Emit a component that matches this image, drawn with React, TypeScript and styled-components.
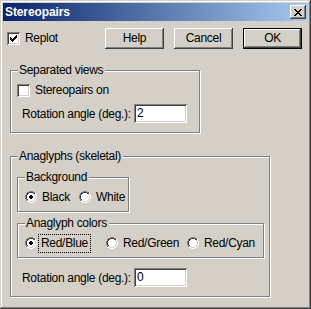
import React from "react";
import styled, { createGlobalStyle } from "styled-components";

const Global = createGlobalStyle`
  html, body { margin: 0; padding: 0; background: #D4D0C8; }
  body { font-family: "Liberation Sans", Arial, sans-serif; font-size: 12px; color: #000; }
`;

const Window = styled.div`
  width: 311px;
  height: 309px;
  box-sizing: border-box;
  background: #d4d0c8;
  padding: 3px;
  box-shadow: inset -1px -1px #404040, inset 1px 1px #d4d0c8, inset -2px -2px #808080, inset 2px 2px #ffffff;
  display: flex;
  flex-direction: column;
`;

const TitleBar = styled.div`
  height: 18px;
  flex: none;
  background: linear-gradient(to right, #0a246a, #a6caf0);
  display: flex;
  align-items: center;
  justify-content: space-between;
  padding: 0 2px;
`;

const TitleText = styled.span`
  color: #fff;
  font-weight: bold;
  font-size: 12px;
  letter-spacing: -0.1px;
  line-height: 18px;
`;

const CloseButton = styled.div`
  width: 16px;
  height: 14px;
  box-sizing: border-box;
  background: #d4d0c8;
  box-shadow: inset -1px -1px #404040, inset 1px 1px #ffffff, inset -2px -2px #808080;
  display: flex;
  align-items: center;
  justify-content: center;
  padding-right: 1px;
`;

const Body = styled.div`
  flex: 1;
  padding: 7px 6px 0 4px;
  display: flex;
  flex-direction: column;
  letter-spacing: -0.3px;
`;

const TopRow = styled.div`
  display: flex;
  align-items: center;
  height: 21px;
`;

const ButtonGroup = styled.div`
  margin-left: auto;
  display: flex;
  gap: 10px;
`;

const Button = styled.div<{ $default?: boolean }>`
  width: 59px;
  height: 21px;
  box-sizing: border-box;
  display: flex;
  align-items: center;
  justify-content: center;
  background: #d4d0c8;
  box-shadow: ${(p) =>
    p.$default
      ? "inset 0 0 0 1px #000, inset -2px -2px #404040, inset 2px 2px #ffffff, inset -3px -3px #808080"
      : "inset -1px -1px #404040, inset 1px 1px #ffffff, inset -2px -2px #808080"};
  padding-bottom: 1px;
`;

const CheckLabel = styled.label`
  display: flex;
  align-items: center;
  gap: 5px;
  height: 13px;
  line-height: 13px;
`;

const CheckBox = styled.span`
  width: 13px;
  height: 13px;
  box-sizing: border-box;
  flex: none;
  background: #fff;
  box-shadow: inset 1px 1px #808080, inset -1px -1px #ffffff, inset 2px 2px #404040, inset -2px -2px #d4d0c8;
  display: flex;
  align-items: center;
  justify-content: center;
`;

const Group = styled.div<{ $w: number; $h: number; $pt?: number }>`
  position: relative;
  width: ${(p) => p.$w}px;
  height: ${(p) => p.$h}px;
  box-sizing: border-box;
  border: 1px solid #808080;
  box-shadow: inset 1px 1px #ffffff, 1px 1px #ffffff;
  padding: ${(p) => p.$pt ?? 13}px 6px 0 6px;
  display: flex;
  flex-direction: column;
`;

const Legend = styled.span`
  position: absolute;
  top: -8px;
  left: 7px;
  padding: 0 2px 0 1px;
  background: #d4d0c8;
  line-height: 14px;
`;

const Group1 = styled(Group)`
  margin-top: 21px;
  margin-left: 3px;
`;

const Group2 = styled(Group)`
  margin-top: 23px;
  margin-left: 3px;
`;

const SubGroupGap = styled.div`
  height: 11px;
  flex: none;
`;

const FieldRow = styled.div<{ $mt: number }>`
  display: flex;
  align-items: center;
  margin-top: ${(p) => p.$mt}px;
  margin-left: 5px;
`;

const FieldLabel = styled.span`
  width: 112px;
  white-space: nowrap;
`;

const TextInput = styled.div`
  width: 53px;
  height: 19px;
  box-sizing: border-box;
  background: #fff;
  box-shadow: inset 1px 1px #808080, inset -1px -1px #ffffff, inset 2px 2px #404040, inset -2px -2px #d4d0c8;
  padding: 2px 3px;
  line-height: 15px;
`;

const RadioRow = styled.div`
  display: flex;
  align-items: center;
  padding-left: 1px;
`;

const RadioOption = styled.label<{ $w: number }>`
  width: ${(p) => p.$w}px;
  display: flex;
  align-items: center;
  height: 12px;
  flex: none;
`;

const RadioCircle = styled.span`
  width: 12px;
  height: 12px;
  flex: none;
  position: relative;
  margin-right: 4px;
`;

const RadioText = styled.span<{ $focus?: boolean }>`
  padding: 1px 1px;
  margin-left: ${(p) => (p.$focus ? -1 : 0)}px;
  outline: ${(p) => (p.$focus ? "1px dotted #000" : "none")};
  outline-offset: 1px;
  line-height: 13px;
  white-space: nowrap;
`;

const Check = () => (
  <svg width="7" height="7" viewBox="0 0 7 7" shapeRendering="crispEdges">
    <rect x="6" y="0" width="1" height="3" fill="#000" />
    <rect x="5" y="1" width="1" height="3" fill="#000" />
    <rect x="4" y="2" width="1" height="3" fill="#000" />
    <rect x="3" y="3" width="1" height="3" fill="#000" />
    <rect x="2" y="4" width="1" height="3" fill="#000" />
    <rect x="1" y="3" width="1" height="3" fill="#000" />
    <rect x="0" y="2" width="1" height="3" fill="#000" />
  </svg>
);

const CloseX = () => (
  <svg width="8" height="7" viewBox="0 0 8 7" shapeRendering="crispEdges">
    <path d="M0 0h2v1h-2zM6 0h2v1h-2zM1 1h2v1h-2zM5 1h2v1h-2zM2 2h4v1h-4zM3 3h2v1h-2zM2 4h4v1h-4zM1 5h2v1h-2zM5 5h2v1h-2zM0 6h2v1h-2zM6 6h2v1h-2z" fill="#000" />
  </svg>
);

const Radio = ({ checked }: { checked?: boolean }) => (
  <RadioCircle>
    <svg width="12" height="12" viewBox="0 0 12 12" shapeRendering="crispEdges">
      {/* outer ring: top-left gray, bottom-right white */}
      <path d="M4 0h4v1h-4zM2 1h2v1h-2zM8 1h2v1h-2zM1 2h1v2h-1zM0 4h1v4h-1zM1 8h1v2h-1z" fill="#808080" />
      <path d="M10 2h1v2h-1zM11 4h1v4h-1zM10 8h1v2h-1zM8 10h2v1h-2zM2 10h2v1h-2zM4 11h4v1h-4z" fill="#ffffff" />
      {/* inner ring: top-left dark, bottom-right light */}
      <path d="M4 1h4v1h-4zM2 2h2v1h-2zM8 2h2v1h-2zM2 3h1v1h-1zM1 4h1v4h-1zM2 8h1v1h-1z" fill="#404040" />
      <path d="M9 3h1v1h-1zM10 4h1v4h-1zM9 8h1v1h-1zM8 9h2v1h-2zM2 9h2v1h-2zM4 10h4v1h-4z" fill="#d4d0c8" />
      {/* white fill */}
      <path d="M4 2h4v1h-4zM3 3h6v1h-6zM2 4h8v4h-8zM3 8h6v1h-6zM4 9h4v1h-4z" fill="#ffffff" />
      {checked && <path d="M5 4h2v1h-2zM4 5h4v2h-4zM5 7h2v1h-2z" fill="#000" />}
    </svg>
  </RadioCircle>
);

export default function App() {
  return (
    <>
      <Global />
      <Window>
        <TitleBar>
          <TitleText>Stereopairs</TitleText>
          <CloseButton>
            <CloseX />
          </CloseButton>
        </TitleBar>
        <Body>
          <TopRow>
            <CheckLabel>
              <CheckBox>
                <Check />
              </CheckBox>
              Replot
            </CheckLabel>
            <ButtonGroup>
              <Button>Help</Button>
              <Button>Cancel</Button>
              <Button $default>OK</Button>
            </ButtonGroup>
          </TopRow>

          <Group1 $w={190} $h={63}>
            <Legend>Separated views</Legend>
            <CheckLabel>
              <CheckBox />
              Stereopairs on
            </CheckLabel>
            <FieldRow $mt={7}>
              <FieldLabel>Rotation angle (deg.):</FieldLabel>
              <TextInput>2</TextInput>
            </FieldRow>
          </Group1>

          <Group2 $w={260} $h={141} $pt={20}>
            <Legend>Anaglyphs (skeletal)</Legend>
            <Group $w={112} $h={35}>
              <Legend>Background</Legend>
              <RadioRow>
                <RadioOption $w={54}>
                  <Radio checked />
                  <RadioText>Black</RadioText>
                </RadioOption>
                <RadioOption $w={54}>
                  <Radio />
                  <RadioText>White</RadioText>
                </RadioOption>
              </RadioRow>
            </Group>
            <SubGroupGap />
            <Group $w={247} $h={35}>
              <Legend>Anaglyph colors</Legend>
              <RadioRow>
                <RadioOption $w={81}>
                  <Radio checked />
                  <RadioText $focus>Red/Blue</RadioText>
                </RadioOption>
                <RadioOption $w={81}>
                  <Radio />
                  <RadioText>Red/Green</RadioText>
                </RadioOption>
                <RadioOption $w={81}>
                  <Radio />
                  <RadioText>Red/Cyan</RadioText>
                </RadioOption>
              </RadioRow>
            </Group>
            <FieldRow $mt={10}>
              <FieldLabel>Rotation angle (deg.):</FieldLabel>
              <TextInput>0</TextInput>
            </FieldRow>
          </Group2>
        </Body>
      </Window>
    </>
  );
}
